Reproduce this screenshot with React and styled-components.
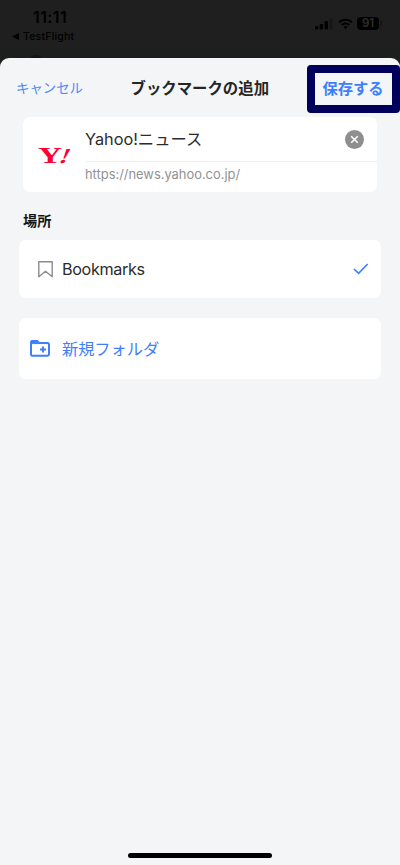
import React from 'react';
import styled, { createGlobalStyle } from 'styled-components';

const App = () => {
  return (
    <Screen>
      <GlobalStyle />
      <StatusBar>
        <StatusLeft>
          <Clock>11:11</Clock>
          <BackLink>
            <svg width='7' height='7' viewBox='0 0 7 7'>
              <path d='M0 3.5 7 0v7z' fill='currentColor' />
            </svg>
            TestFlight
          </BackLink>
        </StatusLeft>
        <StatusRight>
          <SignalIcon />
          <WifiIcon />
          <Battery>91</Battery>
          <BatteryTip />
        </StatusRight>
      </StatusBar>
      <BackdropHint />
      <Sheet>
        <Header>
          <CancelButton>キャンセル</CancelButton>
          <Title>ブックマークの追加</Title>
          <Highlight>
            <SaveButton>保存する</SaveButton>
          </Highlight>
        </Header>
        <SiteCard>
          <YahooLogo />
          <Fields>
            <NameField>
              <SiteName>Yahoo!ニュース</SiteName>
              <ClearButton aria-label='clear'>
                <svg width='19' height='19' viewBox='0 0 19 19'>
                  <circle cx='9.5' cy='9.5' r='9.5' fill='#8e8e8e' />
                  <path
                    d='M6.2 6.2l6.6 6.6M12.8 6.2l-6.6 6.6'
                    stroke='#fff'
                    strokeWidth='1.6'
                  />
                </svg>
              </ClearButton>
            </NameField>
            <UrlField>https://news.yahoo.co.jp/</UrlField>
          </Fields>
        </SiteCard>
        <SectionTitle>場所</SectionTitle>
        <FolderRow>
          <BookmarkIcon />
          <FolderName>Bookmarks</FolderName>
          <CheckIcon />
        </FolderRow>
        <NewFolderRow>
          <NewFolderIcon />
          <NewFolderLabel>新規フォルダ</NewFolderLabel>
        </NewFolderRow>
      </Sheet>
      <HomeIndicator />
    </Screen>
  );
};

export default App;

// Icons

const SignalIcon = () => (
  <svg width='18' height='12' viewBox='0 0 18 12'>
    <rect x='0' y='8' width='3.4' height='3.6' rx='1' />
    <rect x='4.7' y='6' width='3.4' height='5.6' rx='1' />
    <rect x='9.6' y='3' width='3.4' height='8.6' rx='1' />
    <rect x='14.4' y='0.5' width='3.4' height='11.1' rx='1' fill='#181818' />
  </svg>
);

const WifiIcon = () => (
  <WifiSvg viewBox='0 0 16 12' fill='none' stroke='#000'>
    <path d='M1.2 4.2a9.6 9.6 0 0 1 13.6 0' strokeWidth='2.2' />
    <path d='M4 7.1a5.6 5.6 0 0 1 8 0' strokeWidth='2.1' />
    <path d='M8 11.6 5.8 9.3a3.1 3.1 0 0 1 4.4 0z' fill='#000' stroke='none' />
  </WifiSvg>
);

const YahooLogo = () => (
  <LogoSvg viewBox='0 0 44 38'>
    <text transform='translate(5 27) scale(1.42 1)' fontSize='23.5'>
      Y
    </text>
    <text transform='translate(24.8 27) skewX(-24) scale(1.25 1)' fontSize='21.5'>
      !
    </text>
  </LogoSvg>
);

const BookmarkIcon = () => (
  <BookmarkSvg viewBox='0 0 15 17'>
    <path
      d='M.8.8h13.4v15L7.5 10.2.8 15.8z'
      fill='none'
      stroke='#8c8c8c'
      strokeWidth='1.4'
      strokeLinejoin='round'
    />
  </BookmarkSvg>
);

const CheckIcon = () => (
  <svg width='16' height='12' viewBox='0 0 16 12'>
    <path
      d='M1 6l4.6 4.4L14.7 1'
      fill='none'
      stroke='#3f7efc'
      strokeWidth='1.6'
    />
  </svg>
);

const NewFolderIcon = () => (
  <FolderSvg viewBox='0 0 20 17'>
    <path
      d='M1 2.2Q1 1 2.2 1h5l1.8 2h8.6q1.4 0 1.4 1.4v9.9q0 1.4-1.4 1.4H2.2Q1 15.7 1 14.3z'
      strokeWidth='2'
    />
    <path d='M1.5 1.2h6l1.7 2.4H1.5z' fill='#3f7efc' />
    <path d='M13 6.5v6M10 9.5h6' strokeWidth='2' />
  </FolderSvg>
);

// Page

const GlobalStyle = createGlobalStyle`
  * {
    box-sizing: border-box;
  }
  body {
    margin: 0;
    background: #1f1f1f;
    font-family: Inter, 'Noto Sans CJK JP', sans-serif;
  }
  button {
    padding: 0;
    border: none;
    background: none;
    font-family: inherit;
    white-space: nowrap;
  }
  svg {
    display: block;
    flex-shrink: 0;
  }
`;

const Screen = styled.div`
  display: flex;
  flex-direction: column;
  width: 400px;
  height: 865px;
  position: relative;
  overflow: hidden;
  background: linear-gradient(#1f1f1f 46px, #1c1f1e 50px);
`;

const StatusBar = styled.div`
  display: flex;
  justify-content: space-between;
  height: 58px;
  padding: 8px 18px 0 12px;
  color: #000;
`;

const StatusLeft = styled.div`
  display: flex;
  flex-direction: column;
`;

const Clock = styled.span`
  margin-left: 21px;
  font-size: 16px;
  font-weight: 600;
  line-height: 18px;
  letter-spacing: 0.4px;
`;

const BackLink = styled.span`
  display: flex;
  align-items: center;
  gap: 4px;
  margin-top: 4px;
  font-size: 10.5px;
  font-weight: 500;
  line-height: 13px;
  letter-spacing: 0.2px;
`;

const StatusRight = styled.div`
  display: flex;
  align-items: center;
  height: 31px;
`;

const WifiSvg = styled.svg`
  width: 15px;
  height: 12px;
  margin-left: 5px;
`;

const Battery = styled.span`
  width: 22px;
  height: 13px;
  margin-left: 4px;
  border-radius: 4px;
  background: #000;
  color: #2e2e2e;
  font-size: 11.5px;
  font-weight: 600;
  line-height: 13px;
  text-align: center;
`;

const BatteryTip = styled.span`
  width: 2px;
  height: 5px;
  margin-left: 1px;
  border-radius: 0 2px 2px 0;
  background: #141414;
`;

// top of the page icon that shows above the sheet
const BackdropHint = styled.div`
  position: absolute;
  top: 55px;
  left: 29px;
  width: 14px;
  height: 14px;
  border-radius: 50%;
  background: #141515;
`;

const Sheet = styled.main`
  flex: 1;
  position: relative;
  border-radius: 9px 9px 0 0;
  background: #f4f5f7;
`;

const Header = styled.header`
  display: grid;
  grid-template-columns: 115px 1fr 93px;
  align-items: center;
  height: 59px;
`;

const CancelButton = styled.button`
  padding: 0 0 1px 16px;
  color: #5088f5;
  font-size: 13.4px;
  text-align: left;
`;

const Title = styled.h1`
  margin: 2px 0 0 15.5px;
  color: #252525;
  font-size: 15.4px;
  font-weight: 600;
  line-height: 20px;
  white-space: nowrap;
`;

const Highlight = styled.div`
  display: flex;
  align-items: center;
  justify-content: center;
  height: 48px;
  margin-top: 3px;
  border-radius: 4px;
  border: 8px solid #00005c;
`;

const SaveButton = styled.button`
  padding: 0 1px 1px 0;
  color: #3f7efc;
  font-size: 15.3px;
  font-weight: 600;
  line-height: 20px;
`;

const Card = styled.section`
  display: flex;
  align-items: center;
  border-radius: 7px;
  background: #fff;
`;

const SiteCard = styled(Card)`
  height: 75px;
  margin: 0 23px;
  padding-left: 10px;
`;

const LogoSvg = styled.svg`
  width: 44px;
  height: 38px;
  font-family: 'Liberation Serif', serif;
  font-weight: bold;
  fill: #ff0033;
`;

const Fields = styled.div`
  flex: 1;
  height: 100%;
  margin-left: 8px;
`;

const NameField = styled.div`
  display: flex;
  align-items: center;
  justify-content: space-between;
  height: 45px;
  padding-right: 13px;
  border-bottom: 1px solid #eeeeef;
`;

const SiteName = styled.span`
  color: #2c2c2c;
  font-size: 16.3px;
  line-height: 20px;
`;

const ClearButton = styled.button`
  border-radius: 50%;
`;

const UrlField = styled.div`
  color: #929292;
  font-size: 12.9px;
  line-height: 26px;
`;

const SectionTitle = styled.h2`
  margin: 18px 0 9px 23px;
  color: #151515;
  font-size: 14.2px;
  font-weight: 600;
  line-height: 21px;
`;

const FolderRow = styled(Card)`
  height: 58px;
  margin: 0 19px;
  padding: 0 12px 0 19px;
`;

const BookmarkSvg = styled.svg`
  width: 15px;
  height: 17px;
`;

const FolderName = styled.span`
  flex: 1;
  margin-left: 9px;
  color: #2c2c2c;
  font-size: 16.2px;
  letter-spacing: -0.35px;
`;

const NewFolderRow = styled(Card)`
  height: 61px;
  margin: 20px 19px 0;
  padding-left: 11px;
  gap: 12px;
`;

const NewFolderLabel = styled.span`
  padding-bottom: 2px;
  color: #3f7efc;
  font-size: 16.2px;
`;

const FolderSvg = styled.svg`
  width: 20px;
  height: 17px;
  fill: none;
  stroke: #3f7efc;
`;

const HomeIndicator = styled.div`
  position: absolute;
  bottom: 7px;
  left: 128px;
  width: 144px;
  height: 5px;
  border-radius: 3px;
  background: #000;
`;
